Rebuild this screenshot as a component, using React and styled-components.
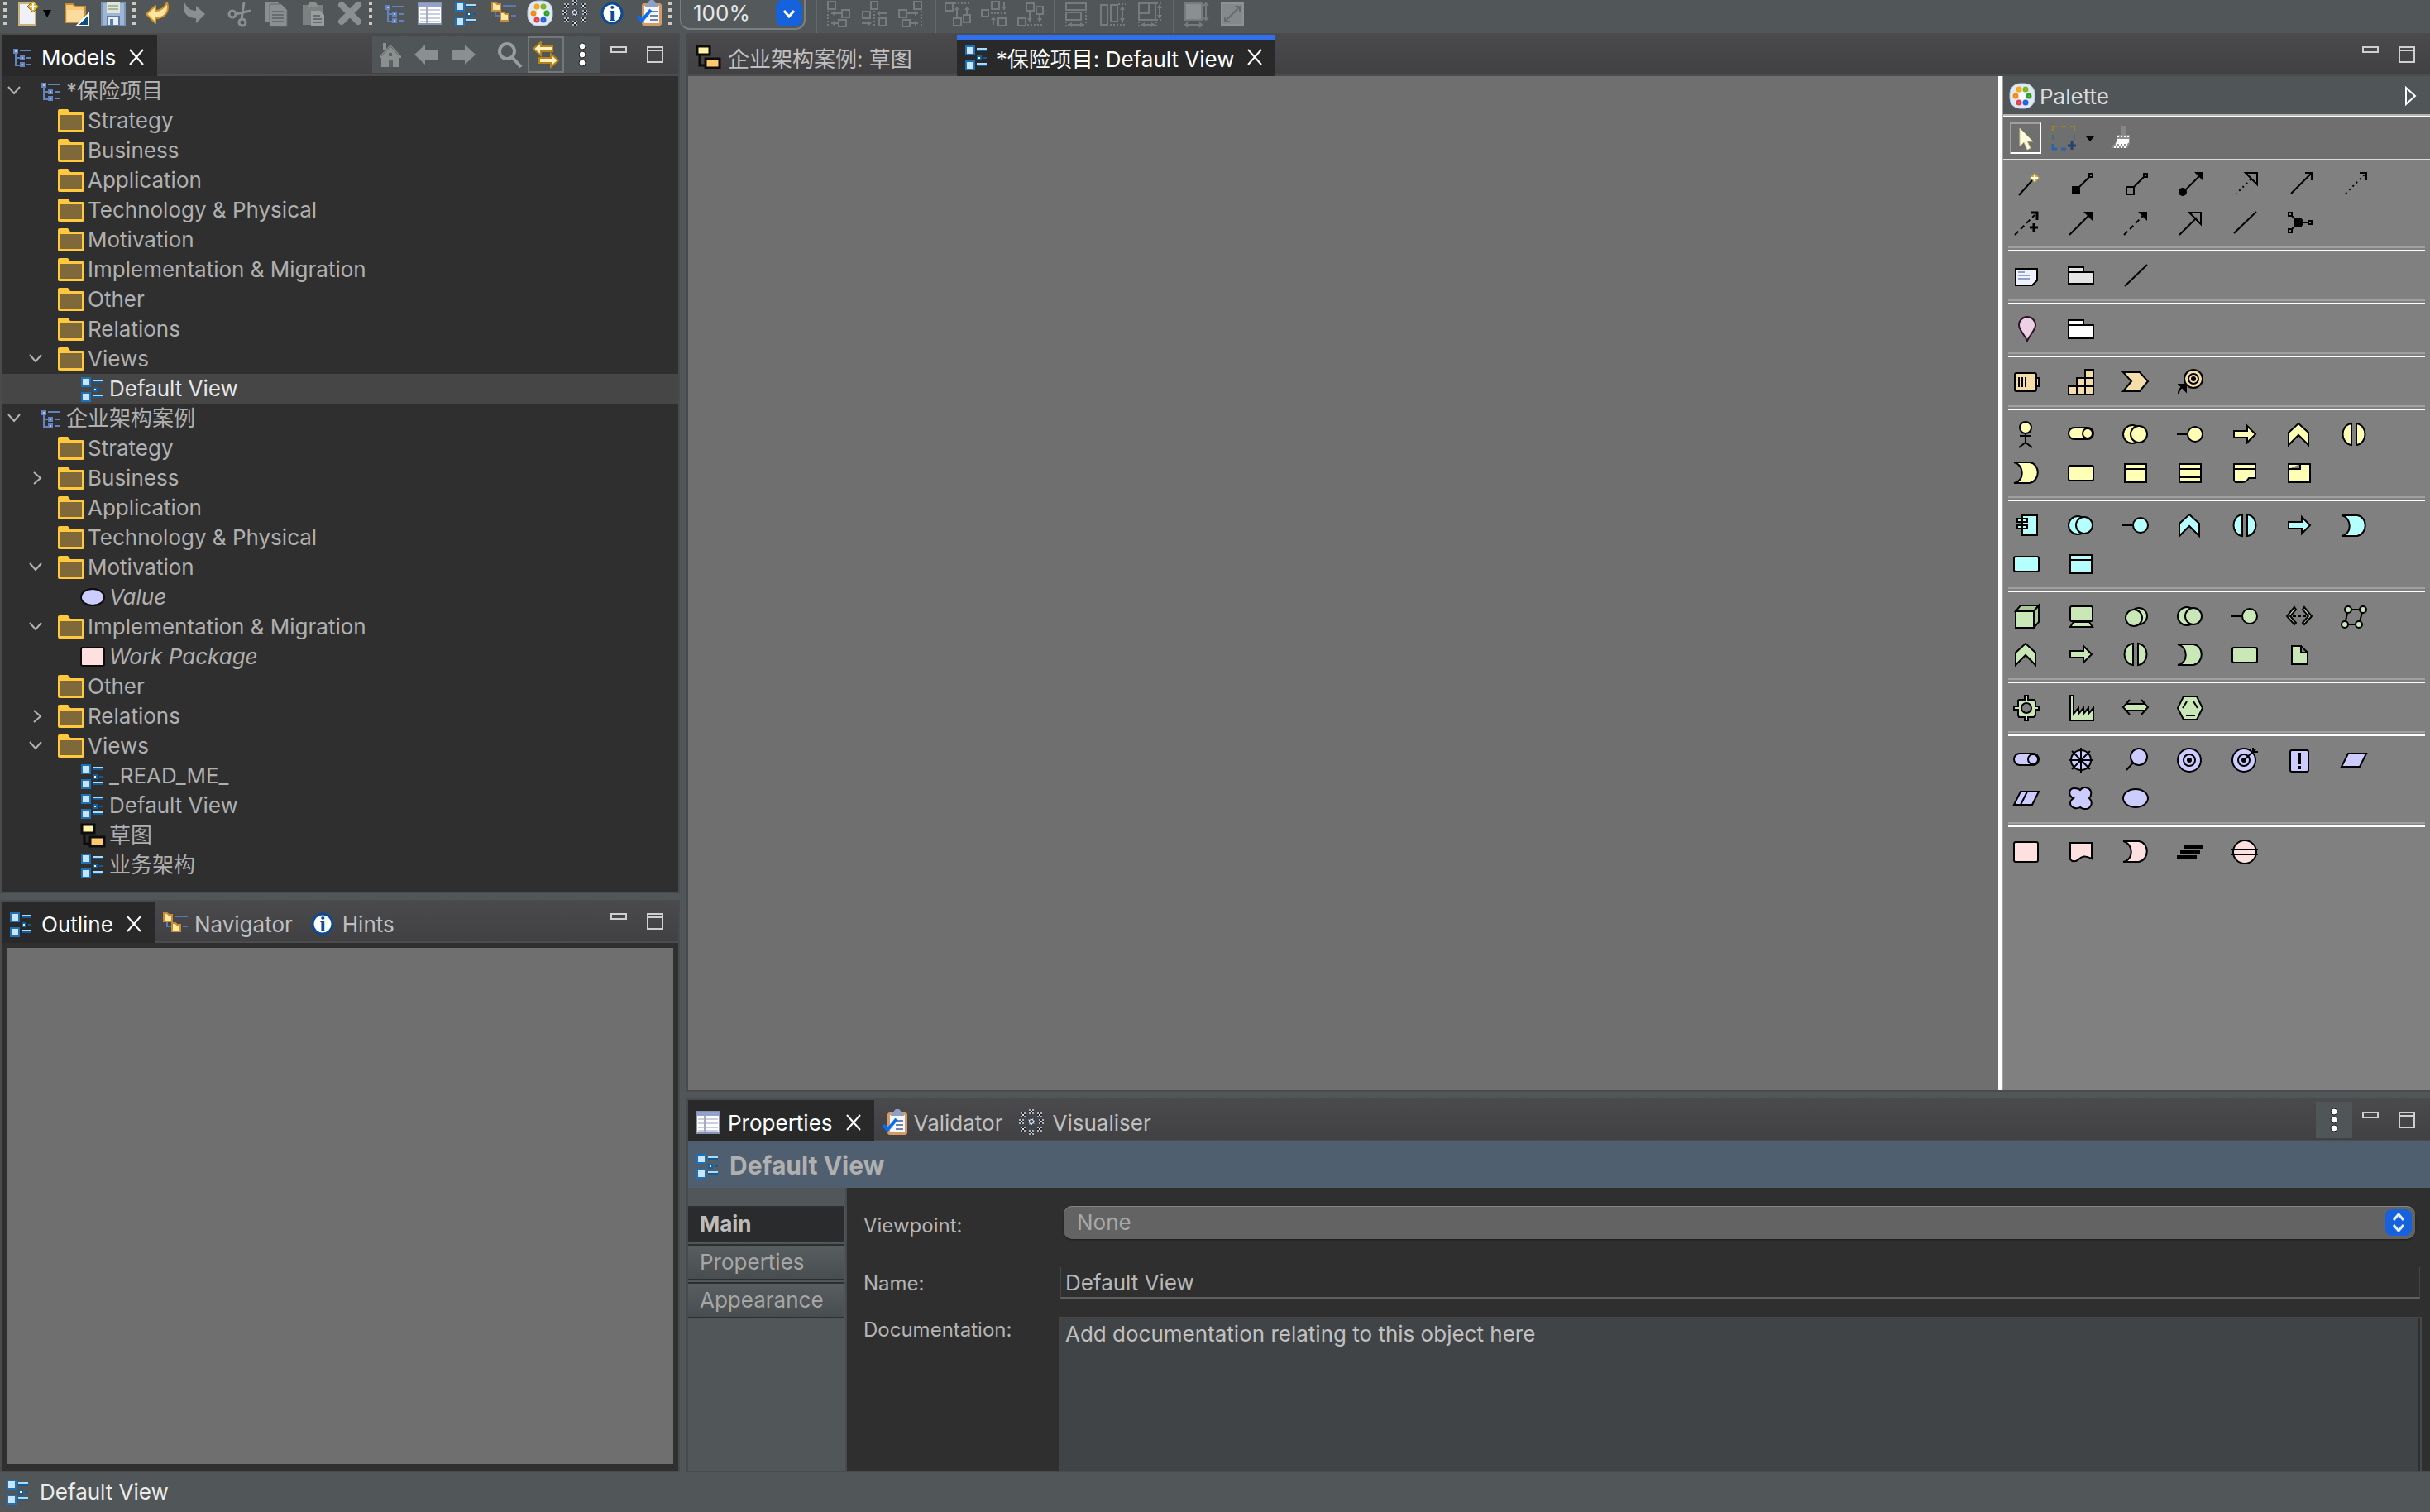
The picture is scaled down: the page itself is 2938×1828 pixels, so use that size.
import React, { useState } from "react";
import styled, { createGlobalStyle } from "styled-components";

/* ---------- icon drawings, all on a 32 x 32 grid ---------- */

const FolderSmall = ({ x, y }) => (
  <path
    d={`M${x + 1} ${y + 2}h4l2 2h4v8h-10z`}
    fill="#ffe9a6"
    stroke="#c98a35"
    strokeWidth="2"
  />
);

const Speck = ({ x, y }) => (
  <g>
    <path
      d={`M${x - 3} ${y - 3}h2v2h-2zM${x + 1} ${y - 3}h2v2h-2zM${x - 3} ${
        y + 1
      }h2v2h-2zM${x + 1} ${y + 1}h2v2h-2z`}
      fill="#aab4be"
    />
    <path d={`M${x - 1} ${y - 1}h2v2h-2z`} fill="#dde4ea" />
    <path
      d={`M${x - 1} ${y - 3}h2v2h-2zM${x - 3} ${y - 1}h2v2h-2zM${x + 1} ${
        y - 1
      }h2v2h-2zM${x - 1} ${y + 1}h2v2h-2z`}
      fill="#23272e"
    />
  </g>
);

const GREY = "#8c8f90";
const FAINT = "#767b7d";

const toolIcons = {
  newFile: (
    <>
      <path d="M5 4h20v26H5z" fill="#eef1f8" stroke="#c9b27c" strokeWidth="2" />
      <path d="M22 1l7 7-7 7-7-7z" fill="#d9b13b" stroke="#8e6a14" />
      <path d="M22 4v8M18 8h8" stroke="#fff" strokeWidth="2" />
    </>
  ),
  open: (
    <>
      <path d="M3 8V5h9l3 3h12v19H3z" fill="#f6c878" stroke="#c98a35" strokeWidth="2" />
      <path d="M5 12h20v14H5z" fill="#fbdc9f" />
      <path d="M31 17v14H17z" fill="#0b4f86" stroke="#fff" strokeWidth="2" />
    </>
  ),
  save: (
    <>
      <path d="M3 3h28v28H3z" fill="#9db6d6" stroke="#7d94b3" strokeWidth="2" />
      <path d="M9 3h16v13H9z" fill="#dfe6d8" />
      <path d="M11 7h12M11 11h12" stroke="#a7b49e" strokeWidth="2" />
      <path d="M10 20h14v11H10z" fill="#e9eff8" stroke="#5c7aa8" strokeWidth="2" />
      <path d="M13 23h4v8h-4z" fill="#5c7aa8" />
    </>
  ),
  undo: (
    <path
      d="M3 17L14 7v6c7 0 11-4 14-10 3 9-1 19-14 19v6z"
      fill="#ffe6a0"
      stroke="#cf912a"
      strokeWidth="2"
      strokeLinejoin="round"
    />
  ),
  redo: <path d="M30 17L19 7v6C12 13 8 9 5 3 2 12 6 22 19 22v6z" fill={GREY} />,
  cut: (
    <g fill="none" stroke={GREY} strokeWidth="3">
      <circle cx="7" cy="17" r="4" />
      <circle cx="19" cy="27" r="4" />
      <path d="M11 17l18-4M18 23l3-20" />
    </g>
  ),
  copy: (
    <>
      <path d="M2 2h15l4 4v20H2z" fill={GREY} />
      <path d="M8 5h14l7 7v20H8z" fill={GREY} stroke="#666b6d" />
      <path d="M11 14h14M11 18h14M11 22h14M11 26h14" stroke="#676c6e" strokeWidth="2" />
    </>
  ),
  paste: (
    <>
      <path d="M4 6h24v24H4z" fill="#7c8081" />
      <path d="M10 8c0-8 12-8 12 0z" fill={GREY} />
      <path d="M14 13h11l5 5v14H14z" fill="#9a9d9e" />
      <path d="M17 19h8M17 23h10M17 27h10" stroke="#676c6e" strokeWidth="2" />
    </>
  ),
  remove: (
    <path
      d="M7 6l20 20M27 6L7 26"
      stroke={GREY}
      strokeWidth="8"
      strokeLinecap="round"
    />
  ),
  model: (
    <g fill="none" stroke="#6482bd" strokeWidth="2">
      <path d="M9 12v15M9 17h5M9 26h5M14 8h14M22 17h6M22 25h6" />
      <path d="M7 7h4v4H7zM15 15h4v4h-4zM15 23h4v4h-4z" fill="#b4c5ea" />
    </g>
  ),
  table: (
    <>
      <path d="M2 3h28v26H2z" fill="#fff" stroke="#8793b3" strokeWidth="2" />
      <path d="M3 4h26v4H3z" fill="#93a2c8" />
      <path d="M4 12h24M4 17h24M4 22h24M4 26h24" stroke="#c9cfde" strokeWidth="2" />
      <path d="M12 8v20" stroke="#a3acc4" strokeWidth="2" />
    </>
  ),
  view: (
    <>
      <path
        d="M3 3h10v10H3zM3 21h10v10H3z"
        fill="#c8e4ff"
        stroke="#1c71b8"
        strokeWidth="2"
      />
      <path d="M16 6h12M16 24h12" stroke="#a8dcf8" strokeWidth="2" />
      <path d="M16 8h12M16 26h12M24 17h4" stroke="#145a96" strokeWidth="2" />
      <path d="M17 15h4v4h-4z" fill="#fff" stroke="#0f62a8" strokeWidth="2" />
    </>
  ),
  navigator: (
    <>
      <path d="M7 13v6h5M16 7h16M26 19h6" fill="none" stroke="#5a78b4" strokeWidth="2" />
      <FolderSmall x={2} y={1} />
      <FolderSmall x={12} y={13} />
    </>
  ),
  palette: (
    <>
      <rect x="2" y="1" width="30" height="30" rx="12" fill="#dfe8f4" stroke="#b6c9e2" />
      <circle cx="17" cy="16" r="5" fill="#f6f9fc" />
      <g fill="#fff3b0" strokeWidth="3">
        <circle cx="13" cy="8" r="2" stroke="#f3a712" />
        <circle cx="21" cy="8" r="2" stroke="#7fb51f" />
        <circle cx="9" cy="16" r="2" stroke="#f08c12" />
        <circle cx="25" cy="16" r="2" stroke="#2ea024" />
        <circle cx="13" cy="24" r="2" stroke="#e0414b" />
        <circle cx="21" cy="24" r="2" stroke="#2363dd" />
      </g>
    </>
  ),
  visualiser: (
    <>
      <Speck x={15} y={3} />
      <Speck x={5} y={7} />
      <Speck x={25} y={7} />
      <Speck x={3} y={15} />
      <Speck x={27} y={15} />
      <Speck x={5} y={24} />
      <Speck x={25} y={24} />
      <Speck x={15} y={28} />
      <circle cx="15" cy="15" r="4" fill="#e4ecf4" stroke="#33404f" strokeWidth="2" strokeDasharray="2 1" />
      <circle cx="15" cy="15" r="2" fill="#33404f" />
    </>
  ),
  hints: (
    <>
      <circle cx="16" cy="16" r="12" fill="#fff" stroke="#0b4a94" strokeWidth="3" />
      <text
        x="16"
        y="25"
        textAnchor="middle"
        fontFamily="Liberation Serif, serif"
        fontWeight="bold"
        fontSize="26"
        fill="#0b4a94"
      >
        i
      </text>
    </>
  ),
  validator: (
    <>
      <rect x="8" y="4" width="24" height="27" rx="3" fill="#d59b66" />
      <path d="M11 7h18v21H11z" fill="#f4f7fc" />
      <path d="M12 8c0-3 4-3 4-6l2-2h4l2 2c0 3 4 3 4 6z" fill="#8fa0c6" />
      <path d="M20 14h7M18 19h9M18 24h9" stroke="#6f82ad" strokeWidth="2" />
      <path d="M3 19l5 6L19 12" fill="none" stroke="#0a6cf5" strokeWidth="4" />
    </>
  ),
  sketch: (
    <g stroke="#0c0c0c" strokeWidth="3">
      <path d="M6 12v14h8" fill="none" />
      <path d="M3 3h15v10H3z" fill="#fff4a3" />
      <path d="M13 18h17v11H13z" fill="#ffc96b" />
    </g>
  ),
  folder: (
    <>
      <path d="M0 7V4q0-2 2-2h10l3 4h15q2 0 2 2v20q0 2-2 2H2q-2 0-2-2z" fill="#ffc83d" />
      <path d="M3 9h26v18H3z" fill="#7f6839" />
    </>
  ),
  value: (
    <ellipse cx="16" cy="16" rx="14" ry="10" fill="#ccccff" stroke="#0c0c0c" strokeWidth="2" />
  ),
  workPackage: (
    <rect x="2" y="5" width="28" height="22" rx="2" fill="#ffe0e0" stroke="#0c0c0c" strokeWidth="2" />
  ),
  home: (
    <>
      <path d="M3 18L16 4l13 14v2h-2v11H5V20H3z" fill={GREY} />
      <path d="M7 2h4v8H7z" fill={GREY} />
      <path d="M5 18L16 6l11 12" fill="none" stroke="#5c6163" />
      <path d="M14 14h4v4h-4zM14 22h5v9h-5z" fill="#5c6163" />
    </>
  ),
  back: <path d="M1 16L14 4v6h15v12H14v6z" fill={GREY} />,
  forward: <path d="M31 16L18 4v6H3v12h15v6z" fill={GREY} />,
  search: (
    <g fill="none" stroke="#999c9d">
      <circle cx="13" cy="12" r="9" strokeWidth="4" />
      <path d="M19 19l11 12" strokeWidth="4" />
    </g>
  ),
  link: (
    <g fill="#fff3c4" stroke="#b8821b" strokeWidth="2">
      <path d="M1 9l9-8v5h14v6H10v5z" />
      <path d="M31 23l-9 8v-5H8v-6h14v-5z" />
    </g>
  ),
  menu: (
    <g fill="#fff" stroke="#1b1b1b">
      <circle cx="16" cy="6" r="4" />
      <circle cx="16" cy="16" r="4" />
      <circle cx="16" cy="26" r="4" />
    </g>
  ),
  minimize: <path d="M7 7h18v6H7z" fill="none" stroke="#cfcfcf" strokeWidth="2" />,
  maximize: <path d="M7 7h18v18H7zM7 11h18" fill="none" stroke="#cfcfcf" strokeWidth="2" />,
  alignLeft: (
    <>
      <path d="M3 2h9v9H3zM20 12h9v9h-9zM16 24h9v8h-9zM7 16h13M7 28h9" />
      <path d="M3 13v19" strokeDasharray="2 2" />
      <path d="M11 13v6l-4-3zM11 25v6l-4-3z" fill={FAINT} stroke="none" />
    </>
  ),
  alignCenter: (
    <>
      <path d="M11 2h8v9h-8zM1 14h9v8H1zM21 22h8v9h-8zM19 16h11M0 28h10" />
      <path d="M15 13v18" strokeDasharray="2 2" />
      <path d="M22 13v6l-4-3zM8 25v6l4-3z" fill={FAINT} stroke="none" />
    </>
  ),
  alignRight: (
    <>
      <path d="M19 2h9v9h-9zM1 12h9v9H1zM5 24h9v8H5zM10 16h14M14 28h10" />
      <path d="M28 13v19" strokeDasharray="2 2" />
      <path d="M20 13v6l4-3zM20 25v6l4-3z" fill={FAINT} stroke="none" />
    </>
  ),
  alignTop: (
    <>
      <path d="M1 4h9v9H1zM11 22h9v9h-9zM23 18h8v9h-8zM15 8v14M27 8v10" />
      <path d="M12 4h18" strokeDasharray="2 2" />
      <path d="M12 12h6l-3-4zM24 12h6l-3-4z" fill={FAINT} stroke="none" />
    </>
  ),
  alignMiddle: (
    <>
      <path d="M13 2h9v9h-9zM1 12h8v8H1zM21 22h9v9h-9zM28 2v10M15 20v10" />
      <path d="M12 16h18" strokeDasharray="2 2" />
      <path d="M25 8h6l-3 4zM12 24h6l-3-4z" fill={FAINT} stroke="none" />
    </>
  ),
  alignBottom: (
    <>
      <path d="M11 4h9v9h-9zM23 8h8v9h-8zM1 22h9v9H1zM15 13v12M27 17v10" />
      <path d="M12 30h18" strokeDasharray="2 2" />
      <path d="M12 22h6l-3 5zM24 22h6l-3 5z" fill={FAINT} stroke="none" />
    </>
  ),
  matchWidth: (
    <>
      <path d="M3 4h24v8H3zM3 15h18v9H3zM5 30h20" />
      <path d="M27 14v14M3 26v6" strokeDasharray="2 2" />
      <path d="M10 27v6l-5-3zM20 27v6l5-3z" fill={FAINT} stroke="none" />
    </>
  ),
  matchHeight: (
    <>
      <path d="M1 6h8v24H1zM13 6h8v20h-8zM27 8v20" />
      <path d="M22 5h9M12 30h18" strokeDasharray="2 2" />
      <path d="M24 12h6l-3-5zM24 22h6l-3 5z" fill={FAINT} stroke="none" />
    </>
  ),
  matchSize: (
    <>
      <path d="M3 4h20v20H3zM15 4v12H3M28 6v16M5 30h18" />
      <path d="M24 4h8M24 24h8M3 26v6M24 26v6" strokeDasharray="2 2" />
      <path d="M25 10h6l-3-5zM25 18h6l-3 5zM10 27v6l-5-3zM18 27v6l5-3z" fill={FAINT} stroke="none" />
    </>
  ),
  defaultSize: (
    <>
      <path d="M3 4h20v20H3z" fill={GREY} />
      <path d="M28 4v20M25 7l3-3 3 3M25 21l3 3 3-3M3 30h20M6 27l-3 3 3 3M20 27l3 3-3 3" />
    </>
  ),
  resize: (
    <>
      <path d="M3 4h26v26H3z" fill="#85898a" stroke="#8f9293" />
      <path d="M7 26L25 8M19 8h6v6M7 20v6h6" stroke="#666b6d" />
    </>
  ),
  pointer: (
    <path
      d="M9 4v22l5-5 4 9 4-2-4-8h7z"
      fill="#fffce0"
      stroke="#c9c48e"
    />
  ),
  marquee: (
    <g fill="none" strokeWidth="2">
      <path d="M2 7V2h5M12 2h6M23 2h5v5" stroke="#97802f" />
      <path d="M2 12v6M28 12v6" stroke="#44706c" />
      <path d="M2 23v6h5M12 29h6" stroke="#2467a8" strokeWidth="3" />
      <path d="M25 20v10M20 25h10" stroke="#27406f" strokeWidth="3" />
    </g>
  ),
  brush: (
    <>
      <path d="M14 1h6v12h-6z" fill="#858585" />
      <path d="M9 12h16v10l-3 6H2l7-8z" fill="#8f8f8f" />
      <path d="M10 14h14" stroke="#fff" strokeWidth="2" strokeDasharray="2 2" />
      <path d="M10 17h14v4l-2 2H8z" fill="#fff" />
      <path d="M8 24h14M6 27h16" stroke="#fff" strokeWidth="2" strokeDasharray="2 2" />
    </>
  ),
};

const openHead = "M17 2h14v14z";
const pageBody = "M3 6h26v22H3z";

const shapes = {
  magic: (
    <>
      <path d="M7 29L24 10" />
      <path d="M26 2l6 6-6 6-6-6z" fill="#d1a63a" stroke="none" />
      <path d="M26 4v8M22 8h8" stroke="#fff" />
    </>
  ),
  composition: (
    <>
      <path d="M13 20L26 7M26 3h4v4h-4z" />
      <path d="M5 18h10v10H5z" fill="#000" stroke="none" />
    </>
  ),
  aggregation: <path d="M14 19L26 7M26 3h4v4h-4zM5 19h9v9H5z" />,
  assignment: (
    <>
      <path d="M8 25L27 6" />
      <path d="M21 1h11v11z" fill="#000" stroke="none" />
      <circle cx="7" cy="25" r="5" fill="#000" stroke="none" />
    </>
  ),
  realization: (
    <>
      <path d="M5 28L24 9" strokeDasharray="2 4" />
      <path d={openHead} />
    </>
  ),
  serving: <path d="M6 27L31 2M23 2h8v9" />,
  access: (
    <>
      <path d="M6 27L29 4" strokeDasharray="2 4" />
      <path d="M23 2h8v9" />
    </>
  ),
  influence: (
    <>
      <path d="M2 31L26 7" strokeDasharray="6 4" />
      <path d="M21 4h8v9M25 17v10M20 22h10" strokeWidth="3" />
    </>
  ),
  triggering: (
    <>
      <path d="M2 31L26 7" />
      <path d="M19 3h11v11z" fill="#000" stroke="none" />
    </>
  ),
  flow: (
    <>
      <path d="M2 31L26 7" strokeDasharray="6 4" />
      <path d="M19 3h11v11z" fill="#000" stroke="none" />
    </>
  ),
  specialization: <path d="M3 31L24 10M15 4h14v14z" />,
  association: <path d="M3 29L30 3" />,
  junction: (
    <>
      <path d="M7 8l8 8-8 8M15 16h12M3 4h4v4H3zM3 24h4v4H3zM27 14h4v4h-4z" />
      <circle cx="15" cy="16" r="6" fill="#000" stroke="none" />
    </>
  ),
  note: (
    <>
      <path d="M3 8h26v14l-6 6H3z" fill="#eef3ff" />
      <path d="M6 12h8M6 16h14M6 20h14" stroke="#8fa3cc" />
    </>
  ),
  group: <path d="M1 12V6h18v6M1 12h30v14H1z" />,
  location: (
    <path d="M17 31C14 24 7 18 7 12a10 10 0 0120 0c0 6-7 12-10 19z" stroke="#2d1226" />
  ),
  grouping: <path d="M1 12V6h18v6M1 12h30v16H1z" />,
  resource: (
    <>
      <path d="M28 12h3v10h-3z" />
      <rect x="2" y="6" width="26" height="22" rx="2" />
      <path d="M7 11v12M11 11v12M15 11v12" />
    </>
  ),
  capability: <path d="M1 22h30v10H1zM11 12h20v10H11zM21 2h10v10H21zM11 22v10M21 12v20" />,
  valueStream: <path d="M1 5h20l10 11-10 12H1l10-12z" />,
  courseOfAction: (
    <>
      <circle cx="20" cy="13" r="11" />
      <circle cx="20" cy="13" r="6" />
      <circle cx="20" cy="13" r="2" fill="#000" />
      <path d="M2 31c0-4 2-7 6-9" fill="none" />
      <path d="M3 20h8v8z" fill="#000" />
    </>
  ),
  actor: (
    <>
      <path d="M15 15v11M8 18h14M7 32l8-6 8 6" fill="none" />
      <circle cx="15" cy="8" r="7" />
    </>
  ),
  role: (
    <>
      <rect x="1" y="8" width="30" height="14" rx="7" />
      <circle cx="24" cy="15" r="6" />
    </>
  ),
  collaboration: (
    <>
      <circle cx="12" cy="16" r="11" />
      <circle cx="20" cy="16" r="10" />
    </>
  ),
  interface: (
    <>
      <path d="M0 16h12" />
      <circle cx="22" cy="16" r="9" />
    </>
  ),
  process: <path d="M3 12h16V6l10 10-10 10v-6H3z" />,
  function: <path d="M15 3l12 11v15L15 17 3 29V14z" />,
  interaction: <path d="M13 3v26C-1 27-1 5 13 3zM19 3v26c14-2 14-24 0-26z" />,
  event: <path d="M1 4h19c13 2 13 22 0 25H1c13-2 13-22 0-25z" />,
  service: <rect x="1" y="8" width="30" height="18" rx="2" />,
  object: <path d={`${pageBody}M3 12h26`} />,
  contract: <path d={`${pageBody}M3 12h26M3 22h26`} />,
  representation: <path d="M3 6h26v17h-8q-3 5-8 5H5l-2-2zM3 12h26" />,
  product: <path d={`${pageBody}M3 12h14V6`} />,
  component: <path d="M11 4h18v24H11zM5 8h12v4H5zM5 16h12v4H5z" />,
  node: (
    <>
      <path d="M3 10l6-7h22l-6 7z" fill="#a9c99b" />
      <path d="M25 10l6-7v20l-6 7z" fill="#a9c99b" />
      <path d="M3 10h22v20H3z" />
    </>
  ),
  device: (
    <>
      <rect x="3" y="4" width="27" height="18" rx="2" />
      <path d="M7 23h19l4 6H3z" />
    </>
  ),
  systemSoftware: (
    <>
      <circle cx="20" cy="16" r="10" />
      <circle cx="14" cy="18" r="10" />
    </>
  ),
  path: (
    <>
      <path d="M10 5L1 16l9 10 2-2-7-8 7-8zM22 5l9 11-9 10-2-2 7-8-7-8z" />
      <path d="M8 16h16" strokeDasharray="4 2" />
    </>
  ),
  network: (
    <>
      <path d="M9 8h18l-5 18H5z" fill="none" />
      <circle cx="9" cy="8" r="4" />
      <circle cx="27" cy="8" r="4" />
      <circle cx="5" cy="26" r="4" />
      <circle cx="22" cy="26" r="4" />
    </>
  ),
  artifact: <path d="M7 6h11l8 8v14H7zM18 6v8h8" />,
  equipment: (
    <>
      <path d="M14 2h4v5h7l2 2v6h4v4h-4v7l-2 2h-7v4h-4v-4H7l-1-2v-7H1v-4h5V8l1-1h7z" />
      <circle cx="16" cy="17" r="6" fill="#808080" />
    </>
  ),
  facility: <path d="M3 2h4v22l6-7v7l6-7v7l6-7v7l6-7v15H3z" />,
  distribution: (
    <>
      <path d="M6 11h20l5 5-5 5H6l-5-5z" stroke="none" />
      <path d="M5 12h22M5 20h22M9 7l-8 9 8 9M23 7l8 9-8 9" fill="none" />
    </>
  ),
  material: <path d="M8 3h16l7 14-7 14H8L1 17zM12 9l-5 8M20 9l5 8M11 26h11" />,
  driver: (
    <>
      <circle cx="16" cy="16" r="12" />
      <path d="M16 1v31M1 16h30M5 5l22 22M27 5L5 27" />
    </>
  ),
  assessment: (
    <>
      <path d="M5 28l9-10" />
      <circle cx="20" cy="12" r="10" />
    </>
  ),
  goal: (
    <>
      <circle cx="15" cy="16" r="14" />
      <circle cx="15" cy="16" r="7" />
      <circle cx="15" cy="16" r="2" fill="#000" />
    </>
  ),
  outcome: (
    <>
      <circle cx="15" cy="16" r="14" />
      <circle cx="15" cy="16" r="7" />
      <circle cx="15" cy="16" r="2" fill="#000" />
      <path d="M15 16L29 3M26 1v5h6" fill="none" />
    </>
  ),
  principle: (
    <>
      <rect x="5" y="4" width="22" height="26" rx="2" />
      <path d="M16 7v14M16 23v4" strokeWidth="4" />
    </>
  ),
  requirement: <path d="M9 8h22l-8 16H1z" />,
  constraint: <path d="M9 8h22l-8 16H1zM17 8L9 24" />,
  meaning: (
    <path d="M15 6c5-6 15-2 13 6 0 2-1 3-2 4 6 6 1 14-6 13-2 0-3-1-5-2-5 3-12 0-12-5 0-2 1-4 4-6-7-3-6-12 1-12 3 0 5 0 7 2z" />
  ),
  value: <ellipse cx="16" cy="16" rx="15" ry="11" />,
  workPackage: <rect x="1" y="5" width="29" height="24" rx="2" />,
  deliverable: <path d="M3 6h26v19c-8-4-12-3-16 1-3 3-8 3-10 0z" />,
  plateau: <path d="M8 11h24M4 17h24M0 23h24" strokeWidth="4" />,
  gap: (
    <>
      <circle cx="16" cy="17" r="14" />
      <path d="M0 14h32M0 20h32" />
    </>
  ),
};

/* ---------- data ---------- */

const paletteGroups = [
  {
    fill: "none",
    items: [
      "magic", "composition", "aggregation", "assignment", "realization",
      "serving", "access", "influence", "triggering", "flow",
      "specialization", "association", "junction",
    ],
  },
  { fill: "#e4e4e4", items: ["note", "group", "association"] },
  { fill: "#ecd1e4", items: ["location"], extra: { fill: "#ffffff", name: "grouping" } },
  { fill: "#f5deaa", items: ["resource", "capability", "valueStream", "courseOfAction"] },
  {
    fill: "#ffffb5",
    items: [
      "actor", "role", "collaboration", "interface", "process", "function",
      "interaction", "event", "service", "object", "contract",
      "representation", "product",
    ],
  },
  {
    fill: "#b5ffff",
    items: [
      "component", "collaboration", "interface", "function", "interaction",
      "process", "event", "service", "object",
    ],
  },
  {
    fill: "#c9e7b7",
    items: [
      "node", "device", "systemSoftware", "collaboration", "interface", "path",
      "network", "function", "process", "interaction", "event", "service",
      "artifact",
    ],
  },
  { fill: "#c9e7b7", items: ["equipment", "facility", "distribution", "material"] },
  {
    fill: "#ccccff",
    items: [
      "role", "driver", "assessment", "goal", "outcome", "principle",
      "requirement", "constraint", "meaning", "value",
    ],
  },
  { fill: "#ffe0e0", items: ["workPackage", "deliverable", "event", "plateau", "gap"] },
];

const treeRows = [
  { level: 0, icon: "model", label: "*保险项目", toggle: "open" },
  { level: 1, icon: "folder", label: "Strategy" },
  { level: 1, icon: "folder", label: "Business" },
  { level: 1, icon: "folder", label: "Application" },
  { level: 1, icon: "folder", label: "Technology & Physical" },
  { level: 1, icon: "folder", label: "Motivation" },
  { level: 1, icon: "folder", label: "Implementation & Migration" },
  { level: 1, icon: "folder", label: "Other" },
  { level: 1, icon: "folder", label: "Relations" },
  { level: 1, icon: "folder", label: "Views", toggle: "open" },
  { level: 2, icon: "view", label: "Default View" },
  { level: 0, icon: "model", label: "企业架构案例", toggle: "open" },
  { level: 1, icon: "folder", label: "Strategy" },
  { level: 1, icon: "folder", label: "Business", toggle: "closed" },
  { level: 1, icon: "folder", label: "Application" },
  { level: 1, icon: "folder", label: "Technology & Physical" },
  { level: 1, icon: "folder", label: "Motivation", toggle: "open" },
  { level: 2, icon: "value", label: "Value", italic: true },
  { level: 1, icon: "folder", label: "Implementation & Migration", toggle: "open" },
  { level: 2, icon: "workPackage", label: "Work Package", italic: true },
  { level: 1, icon: "folder", label: "Other" },
  { level: 1, icon: "folder", label: "Relations", toggle: "closed" },
  { level: 1, icon: "folder", label: "Views", toggle: "open" },
  { level: 2, icon: "view", label: "_READ_ME_" },
  { level: 2, icon: "view", label: "Default View" },
  { level: 2, icon: "sketch", label: "草图" },
  { level: 2, icon: "view", label: "业务架构" },
];

const editTools = ["cut", "copy", "paste", "remove"];
const viewTools = [
  "model", "table", "view", "navigator", "palette", "visualiser", "hints", "validator",
];
const alignTools = [
  ["alignLeft", "alignCenter", "alignRight"],
  ["alignTop", "alignMiddle", "alignBottom"],
  ["matchWidth", "matchHeight", "matchSize"],
  ["defaultSize", "resize"],
];
const sections = ["Main", "Properties", "Appearance"];

/* ---------- small components ---------- */

const Icon = ({ name }) => (
  <Glyph viewBox="0 0 32 32" aria-hidden="true">
    {toolIcons[name]}
  </Glyph>
);

const AlignIcon = ({ name }) => (
  <Glyph viewBox="0 0 32 32" fill="none" stroke={FAINT} strokeWidth="2" aria-hidden="true">
    {toolIcons[name]}
  </Glyph>
);

const Shape = ({ name, fill }) => (
  <Glyph viewBox="0 0 32 32" fill={fill} stroke="#000" strokeWidth="2" aria-hidden="true">
    {shapes[name]}
  </Glyph>
);

const Tool = ({ name }) => (
  <ToolButton type="button" aria-label={name}>
    <Icon name={name} />
  </ToolButton>
);

const HeaderTool = ({ name, $framed }) => (
  <HeaderButton type="button" aria-label={name} $framed={$framed}>
    <Icon name={name} />
  </HeaderButton>
);

const Tab = ({ icon, label, active, accent, closable }) => (
  <TabItem role="tab" aria-selected={!!active} $active={active} $accent={accent}>
    <Icon name={icon} />
    <span>{label}</span>
    {closable && (
      <CloseButton type="button" aria-label={`Close ${label}`} $hidden={!active}>
        <CloseMark viewBox="0 0 18 20" aria-hidden="true">
          <path d="M1 1l16 18M17 1L1 19" stroke="currentColor" strokeWidth="2" />
        </CloseMark>
      </CloseButton>
    )}
  </TabItem>
);

const WindowButtons = () => (
  <>
    <HeaderTool name="minimize" />
    <HeaderTool name="maximize" />
  </>
);

const Chevron = ({ state }) => (
  <ChevronMark viewBox="0 0 16 16" aria-hidden="true">
    <path
      d={state === "open" ? "M1 3l7 8 7-8" : "M6 1l8 7-8 7"}
      fill="none"
      stroke="#b4b4b4"
      strokeWidth="2"
    />
  </ChevronMark>
);

const MainToolbar = () => (
  <Toolbar>
    <Grip />
    <SplitTool>
      <Tool name="newFile" />
      <ArrowButton type="button" aria-label="New options">
        <ArrowMark viewBox="0 0 10 9" aria-hidden="true">
          <path d="M0 0h10L5 9z" />
        </ArrowMark>
      </ArrowButton>
    </SplitTool>
    <Tool name="open" />
    <Tool name="save" />
    <Grip />
    <Tool name="undo" />
    <Tool name="redo" />
    <Spacer />
    {editTools.map((name) => (
      <Tool key={name} name={name} />
    ))}
    <Grip />
    {viewTools.map((name) => (
      <Tool key={name} name={name} />
    ))}
    <Grip />
    <ZoomBox>
      <ZoomSelect aria-label="Zoom" defaultValue="100%">
        <option>100%</option>
      </ZoomSelect>
      <ZoomCap>
        <CapMark viewBox="0 0 32 32" aria-hidden="true">
          <path d="M10 13l6 7 6-7" fill="none" stroke="#fff" strokeWidth="3" />
        </CapMark>
      </ZoomCap>
    </ZoomBox>
    {alignTools.map((group) => (
      <React.Fragment key={group[0]}>
        <Divider />
        {group.map((name) => (
          <ToolButton key={name} type="button" aria-label={name}>
            <AlignIcon name={name} />
          </ToolButton>
        ))}
      </React.Fragment>
    ))}
  </Toolbar>
);

const ModelsPanel = () => {
  const [selected, setSelected] = useState(10);
  return (
    <Panel $grow>
      <PanelHeader>
        <Tab icon="model" label="Models" active closable />
        <HeaderActions>
          <ActionGroup>
            <HeaderTool name="home" />
            <HeaderTool name="back" />
            <HeaderTool name="forward" />
            <ActionGap />
            <HeaderTool name="search" />
            <HeaderTool name="link" $framed />
            <HeaderTool name="menu" />
          </ActionGroup>
          <WindowButtons />
        </HeaderActions>
      </PanelHeader>
      <Tree role="tree">
        {treeRows.map((row, i) => (
          <TreeRow
            key={i}
            role="treeitem"
            aria-selected={i === selected}
            $level={row.level}
            $selected={i === selected}
            $italic={row.italic}
            onClick={() => setSelected(i)}
          >
            <Toggle>{row.toggle && <Chevron state={row.toggle} />}</Toggle>
            <Icon name={row.icon} />
            <TreeLabel>{row.label}</TreeLabel>
          </TreeRow>
        ))}
      </Tree>
    </Panel>
  );
};

const OutlinePanel = () => (
  <Panel $height={692}>
    <PanelHeader>
      <Tab icon="view" label="Outline" active closable />
      <Tab icon="navigator" label="Navigator" />
      <Tab icon="hints" label="Hints" />
      <HeaderActions>
        <WindowButtons />
      </HeaderActions>
    </PanelHeader>
    <OutlineBody>
      <OutlineCanvas />
    </OutlineBody>
  </Panel>
);

const Palette = () => (
  <PaletteFrame>
    <PaletteHeader>
      <Icon name="palette" />
      <PaletteTitle>Palette</PaletteTitle>
      <PinButton type="button" aria-label="Collapse palette">
        <PinMark viewBox="0 0 14 24" aria-hidden="true">
          <path d="M1 2v20l11-10z" fill="none" stroke="#fff" strokeWidth="2" />
        </PinMark>
      </PinButton>
    </PaletteHeader>
    <PaletteTools>
      <PaletteTool type="button" aria-label="Select" $pressed>
        <Icon name="pointer" />
      </PaletteTool>
      <SplitTool $gap={4}>
        <PaletteTool type="button" aria-label="Marquee">
          <Icon name="marquee" />
        </PaletteTool>
        <ArrowButton type="button" aria-label="Marquee options" $wide>
          <ArrowMark viewBox="0 0 10 9" aria-hidden="true">
            <path d="M0 2h10L5 8z" />
          </ArrowMark>
        </ArrowButton>
      </SplitTool>
      <PaletteTool type="button" aria-label="Format painter">
        <Icon name="brush" />
      </PaletteTool>
    </PaletteTools>
    {paletteGroups.map((group, i) => (
      <PaletteGroup key={i}>
        {group.items.map((name) => (
          <ShapeButton key={name} type="button" aria-label={name}>
            <Shape name={name} fill={group.fill} />
          </ShapeButton>
        ))}
        {group.extra && (
          <ShapeButton type="button" aria-label={group.extra.name}>
            <Shape name={group.extra.name} fill={group.extra.fill} />
          </ShapeButton>
        )}
      </PaletteGroup>
    ))}
  </PaletteFrame>
);

const EditorPanel = () => (
  <Panel $grow $flush>
    <PanelHeader>
      <Tab icon="sketch" label="企业架构案例: 草图" closable />
      <Tab icon="view" label="*保险项目: Default View" active accent closable />
      <HeaderActions>
        <WindowButtons />
      </HeaderActions>
    </PanelHeader>
    <EditorBody>
      <Canvas />
      <Palette />
    </EditorBody>
  </Panel>
);

const PropertiesPanel = () => {
  const [section, setSection] = useState("Main");
  return (
    <Panel $height={452} $flush>
      <PanelHeader>
        <Tab icon="table" label="Properties" active closable />
        <Tab icon="validator" label="Validator" />
        <Tab icon="visualiser" label="Visualiser" />
        <HeaderActions>
          <ActionGroup>
            <HeaderTool name="menu" />
          </ActionGroup>
          <WindowButtons />
        </HeaderActions>
      </PanelHeader>
      <Heading>
        <Icon name="view" />
        Default View
      </Heading>
      <PropertiesBody>
        <SectionList>
          {sections.map((name) => (
            <SectionButton
              key={name}
              type="button"
              $active={name === section}
              onClick={() => setSection(name)}
            >
              {name}
            </SectionButton>
          ))}
        </SectionList>
        <Form onSubmit={(e) => e.preventDefault()}>
          <Field $gap={26}>
            <Label htmlFor="viewpoint" $height={48}>
              Viewpoint:
            </Label>
            <SelectBox>
              <Select id="viewpoint" defaultValue="None">
                <option>None</option>
              </Select>
              <SelectCap>
                <CapMark viewBox="0 0 32 32" aria-hidden="true">
                  <path
                    d="M10 13l6-7 6 7M10 19l6 7 6-7"
                    fill="none"
                    stroke="#e6efff"
                    strokeWidth="3"
                  />
                </CapMark>
              </SelectCap>
            </SelectBox>
          </Field>
          <Field $gap={20}>
            <Label htmlFor="name" $height={40}>
              Name:
            </Label>
            <TextInput id="name" type="text" defaultValue="Default View" />
          </Field>
          <Field $fill>
            <Label htmlFor="documentation" $height={32}>
              Documentation:
            </Label>
            <TextArea
              id="documentation"
              defaultValue="Add documentation relating to this object here"
            />
          </Field>
        </Form>
      </PropertiesBody>
    </Panel>
  );
};

const App = () => {
  return (
    <>
      <GlobalStyle />
      <Window>
        <MainToolbar />
        <Workbench>
          <LeftColumn>
            <ModelsPanel />
            <OutlinePanel />
          </LeftColumn>
          <RightColumn>
            <EditorPanel />
            <PropertiesPanel />
          </RightColumn>
        </Workbench>
        <StatusBar>
          <Icon name="view" />
          Default View
        </StatusBar>
      </Window>
    </>
  );
};

export default App;

// Styled Components

const GlobalStyle = createGlobalStyle`
  * {
    box-sizing: border-box;
  }
  body {
    margin: 0;
    background: #515658;
  }
  body, button, input, select, textarea {
    font-family: Inter, "Noto Sans CJK SC", sans-serif;
    font-size: 26px;
  }
  button {
    border: 0;
    padding: 0;
    background: none;
    color: inherit;
  }
`;

const Window = styled.div`
  display: flex;
  flex-direction: column;
  min-height: 100vh;
  background: #515658;
  color: #b4b4b4;
`;

const Glyph = styled.svg`
  flex: none;
  display: block;
  width: 32px;
  height: 32px;
  overflow: visible;
`;

const Toolbar = styled.header`
  display: flex;
  align-items: flex-start;
  gap: 12px;
  height: 40px;
  padding-left: 8px;
  overflow: hidden;
`;

const Grip = styled.span`
  flex: none;
  width: 4px;
  height: 32px;
  margin: 0 -2px 0 -4px;
  background: repeating-linear-gradient(
    to bottom,
    transparent 0 2px,
    #cdc8bd 2px 6px,
    transparent 6px 8px
  );
`;

const Spacer = styled.span`
  width: 0;
`;

const SplitTool = styled.div`
  display: flex;
  align-items: center;
  gap: ${(p) => p.$gap || 0}px;
`;

const ToolButton = styled.button`
  flex: none;
  width: 32px;
  height: 32px;
`;

const ArrowButton = styled.button`
  display: flex;
  align-items: center;
  justify-content: center;
  width: ${(p) => (p.$wide ? 22 : 14)}px;
  height: 32px;
`;

const ArrowMark = styled.svg`
  width: 10px;
  height: 9px;
  fill: #000;
`;

const ZoomBox = styled.div`
  display: grid;
  flex: none;
  width: 152px;
  height: 36px;
  padding-right: 2px;
  border: solid #7b7f81;
  border-width: 0 2px 2px 1px;
  border-radius: 0 0 12px 12px;
  background: #54595b;
`;

const ZoomSelect = styled.select`
  grid-area: 1 / 1;
  appearance: none;
  height: 30px;
  padding: 0 0 0 15px;
  border: 0;
  background: none;
  color: #e6e6e6;
`;

const ZoomCap = styled.span`
  grid-area: 1 / 1;
  justify-self: end;
  width: 32px;
  height: 32px;
  border-radius: 8px;
  background: #1662dc;
  pointer-events: none;
`;

const CapMark = styled.svg`
  display: block;
  width: 32px;
  height: 32px;
`;

const Divider = styled.span`
  flex: none;
  width: 2px;
  height: 40px;
  margin-right: -2px;
  background: #66696b;
`;

const Workbench = styled.main`
  display: flex;
  flex: 1;
  gap: 8px;
`;

const LeftColumn = styled.div`
  display: flex;
  flex: none;
  flex-direction: column;
  gap: 8px;
  width: 822px;
`;

const RightColumn = styled.div`
  display: flex;
  flex: 1;
  flex-direction: column;
  gap: 8px;
  min-width: 0;
`;

const Panel = styled.section`
  display: flex;
  flex: ${(p) => (p.$grow ? "1" : "none")};
  flex-direction: column;
  height: ${(p) => (p.$height ? `${p.$height}px` : "auto")};
  border: 2px solid #4a4b4d;
  border-right-width: ${(p) => (p.$flush ? "0" : "2px")};
`;

const PanelHeader = styled.div`
  display: flex;
  flex: none;
  height: 50px;
  background: linear-gradient(#4a4a4d, #414143 48px, #4c4c4f 48px);
`;

const TabItem = styled.div`
  display: flex;
  align-items: center;
  gap: 8px;
  height: 50px;
  padding: 4px ${(p) => (p.$active ? 0 : 12)}px 0 8px;
  white-space: nowrap;
  background: ${(p) => (p.$active ? "#292929" : "transparent")};
  color: ${(p) => (p.$active ? "#ffffff" : "#c0c0c0")};
  box-shadow: ${(p) => (p.$accent ? "inset 0 6px #3070f0" : "none")};
`;

const CloseButton = styled.button`
  margin: 0 ${(p) => (p.$hidden ? 8 : 16)}px 0 8px;
  visibility: ${(p) => (p.$hidden ? "hidden" : "visible")};
`;

const CloseMark = styled.svg`
  display: block;
  width: 18px;
  height: 20px;
`;

const HeaderActions = styled.div`
  display: flex;
  height: 48px;
  margin-left: auto;
  padding: 2px 6px 2px 0;
`;

const ActionGroup = styled.div`
  display: flex;
  background: #505557;
`;

const ActionGap = styled.span`
  width: 12px;
`;

const HeaderButton = styled.button`
  display: flex;
  align-items: center;
  justify-content: center;
  width: 44px;
  height: 44px;
  border: ${(p) => (p.$framed ? "2px solid #737778" : "0")};
`;

const Tree = styled.ul`
  flex: 1;
  margin: 0;
  padding: 0 0 14px;
  list-style: none;
  background: #2f2f2f;
`;

const TreeRow = styled.li`
  display: flex;
  align-items: center;
  height: 36px;
  padding-left: ${(p) => 2 + p.$level * 26}px;
  background: ${(p) => (p.$selected ? "#464646" : "transparent")};
  color: ${(p) => (p.$selected ? "#e8e8e8" : "#b0b0b0")};
  font-style: ${(p) => (p.$italic ? "italic" : "normal")};
`;

const Toggle = styled.span`
  display: flex;
  justify-content: center;
  width: 26px;
  margin-right: 14px;
`;

const ChevronMark = styled.svg`
  width: 16px;
  height: 16px;
`;

const TreeLabel = styled.span`
  margin-left: 4px;
  line-height: 36px;
  white-space: nowrap;
`;

const OutlineBody = styled.div`
  display: flex;
  flex: 1;
  padding: 6px 6px 8px;
  background: #2f2f2f;
`;

const OutlineCanvas = styled.div`
  flex: 1;
  background: #6f6f6f;
`;

const EditorBody = styled.div`
  display: flex;
  flex: 1;
`;

const Canvas = styled.div`
  flex: 1;
  background: #6f6f6f;
`;

const PaletteFrame = styled.aside`
  flex: none;
  width: 522px;
  border-left: 4px solid #ffffff;
  box-shadow: inset 2px 0 #a0a0a0;
  background: #808080;
`;

const PaletteHeader = styled.div`
  display: flex;
  align-items: center;
  height: 50px;
  margin-left: 2px;
  padding: 0 16px 0 6px;
  border-bottom: 2px solid #ffffff;
  background: #505557;
  box-shadow: inset 0 -2px #b4b4b4;
  color: #dcdcdc;
`;

const PaletteTitle = styled.span`
  flex: 1;
  margin-left: 6px;
`;

const PinButton = styled.button`
  display: flex;
`;

const PinMark = styled.svg`
  width: 14px;
  height: 24px;
`;

const PaletteTools = styled.div`
  display: flex;
  align-items: center;
  height: 52px;
  margin-left: 2px;
  padding-left: 8px;
  gap: 12px;
  border-bottom: 2px solid #dcdcdc;
  background: #6f6f6f;
`;

const PaletteTool = styled.button`
  display: flex;
  align-items: center;
  justify-content: center;
  width: ${(p) => (p.$pressed ? 38 : 32)}px;
  height: 38px;
  border: ${(p) => (p.$pressed ? "2px solid" : "0")};
  border-color: #a0a0a0 #ffffff #ffffff #a0a0a0;
`;

const PaletteGroup = styled.div`
  display: grid;
  grid-template-columns: repeat(7, 32px);
  column-gap: 34px;
  margin: 0 6px 0 8px;
  padding: 6px 0 6px 6px;
  & + & {
    border-top: 2px solid #a0a0a0;
    box-shadow: inset 0 2px #808080, inset 0 4px #ffffff;
    padding-top: 10px;
  }
`;

const ShapeButton = styled.button`
  display: flex;
  align-items: center;
  height: 46px;
`;

const Heading = styled.h2`
  display: flex;
  flex: none;
  align-items: center;
  gap: 10px;
  height: 56px;
  margin: 0;
  padding: 2px 0 0 8px;
  background: #505f70;
  color: #b0b0b0;
  font-size: 30px;
  font-weight: 700;
`;

const PropertiesBody = styled.div`
  display: flex;
  flex: 1;
  min-height: 0;
`;

const SectionList = styled.nav`
  display: flex;
  flex: none;
  flex-direction: column;
  gap: 2px;
  width: 192px;
  padding: 22px 2px 0 0;
  border-right: 2px solid #474b4d;
`;

const SectionButton = styled.button`
  height: 44px;
  padding: 0 0 2px 14px;
  border: solid #2c2e2f;
  border-width: 2px 0;
  background: ${(p) =>
    p.$active ? "#2a2b2d" : "linear-gradient(#585d5f, #484d4f)"};
  color: ${(p) => (p.$active ? "#bcbcbc" : "#a6a6a6")};
  font-weight: ${(p) => (p.$active ? 700 : 400)};
  text-align: left;
`;

const Form = styled.form`
  display: flex;
  flex: 1;
  flex-direction: column;
  padding: 22px 10px 0 20px;
  background: #2f2f2f;
`;

const Field = styled.div`
  display: flex;
  flex: ${(p) => (p.$fill ? "1" : "none")};
  align-items: ${(p) => (p.$fill ? "stretch" : "flex-start")};
  margin-bottom: ${(p) => p.$gap || 0}px;
`;

const Label = styled.label`
  flex: none;
  width: 236px;
  height: ${(p) => p.$height}px;
  line-height: ${(p) => p.$height}px;
  font-size: 24px;
`;

const SelectBox = styled.div`
  display: grid;
  flex: 1;
  height: 40px;
  margin: 0 8px 0 6px;
  border-radius: 10px;
  background: #636363;
  box-shadow: inset 0 1px #858585, 0 1px 2px #1c1c1c;
`;

const Select = styled.select`
  grid-area: 1 / 1;
  appearance: none;
  padding: 0 0 2px 16px;
  border: 0;
  background: none;
  color: #a8a8a8;
`;

const SelectCap = styled.span`
  grid-area: 1 / 1;
  align-self: center;
  justify-self: end;
  width: 32px;
  height: 32px;
  margin-right: 4px;
  border-radius: 8px;
  background: #1662dc;
  pointer-events: none;
`;

const TextInput = styled.input`
  flex: 1;
  height: 38px;
  margin: 0 2px;
  padding: 0 0 0 5px;
  border: solid #464646;
  border-width: 0 1px 2px;
  border-bottom-color: #5f5f5f;
  outline: none;
  background: #2f2f2f;
  color: #b8b8b8;
`;

const TextArea = styled.textarea`
  flex: 1;
  padding: 4px 8px;
  border: 0;
  border-top: 2px solid #444648;
  outline: none;
  resize: none;
  background: #404446;
  box-shadow: inset -2px 0 #464849, inset -4px 0 #2f2f2f;
  color: #c0c0c0;
  line-height: 30px;
`;

const StatusBar = styled.footer`
  display: flex;
  align-items: center;
  gap: 10px;
  height: 48px;
  padding: 0 0 2px 6px;
  color: #ececec;
`;
